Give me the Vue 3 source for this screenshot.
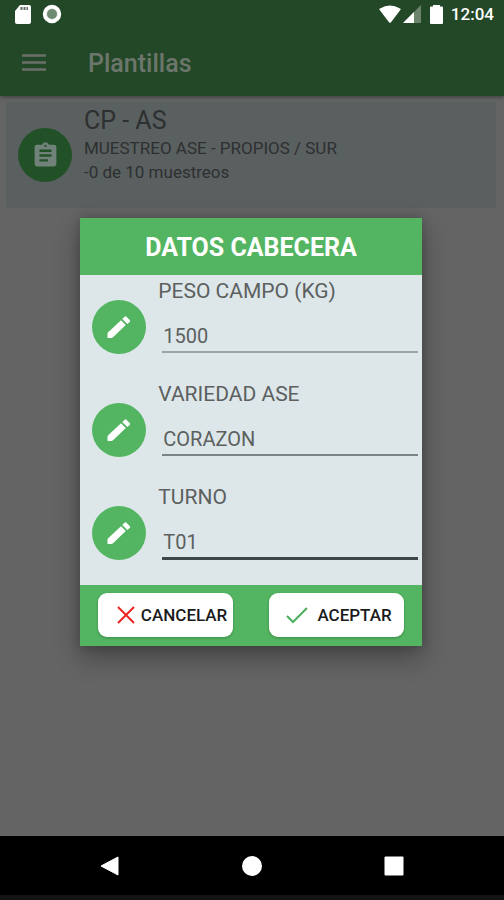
<script setup>
import { reactive } from 'vue'

const fields = reactive([
  { id: 'peso', label: 'PESO CAMPO (KG)', value: '1500', state: '' },
  { id: 'variedad', label: 'VARIEDAD ASE', value: 'CORAZON', state: 'darker' },
  { id: 'turno', label: 'TURNO', value: 'T01', state: 'active' },
])
</script>

<template>
  <div class="screen">
    <header class="top">
      <div class="status">
        <svg class="sd" viewBox="0 0 16 19" aria-hidden="true">
          <path d="M5 0h9a2 2 0 0 1 2 2v15a2 2 0 0 1-2 2H2a2 2 0 0 1-2-2V6z" fill="#fff" />
          <path d="M5.500 2h2v3h-2zM8.500 2h2v3h-2zM11.500 2h1.500v3h-1.500z" fill="#5d6d5f" />
        </svg>
        <svg class="sync" viewBox="0 0 20 20" aria-hidden="true">
          <circle cx="10" cy="10" r="7.500" fill="#dfe5e0" stroke="#fff" stroke-width="3.400" />
          <circle cx="10" cy="10" r="5" fill="#6f8a72" />
        </svg>
        <span class="grow"></span>
        <svg class="wifi" viewBox="0 0 22 18" aria-hidden="true">
          <path d="M.5 4.800Q0 4 1 3.500Q11-2.500 21 3.500Q22 4 21.500 4.800L12 17.200Q11 18.300 10 17.200z" fill="#fff" />
        </svg>
        <svg class="signal" viewBox="0 0 18 18" aria-hidden="true">
          <path d="M18 0v18H0z" fill="#6c836c" />
          <path d="M11 7v11H0z" fill="#fff" />
        </svg>
        <svg class="battery" viewBox="0 0 13 19" aria-hidden="true">
          <path d="M3 0h7v1.500h2a1 1 0 0 1 1 1V18a1 1 0 0 1-1 1H1a1 1 0 0 1-1-1V2.500a1 1 0 0 1 1-1h2z" fill="#fff" />
        </svg>
        <time class="clock">12:04</time>
      </div>
      <div class="bar">
        <button class="menu" type="button" aria-label="Menú">
          <svg viewBox="0 0 24 17" aria-hidden="true">
            <path d="M0 1.500h24M0 8.500h24M0 15.500h24" stroke="#6a7069" stroke-width="2.600" />
          </svg>
        </button>
        <h1>Plantillas</h1>
      </div>
    </header>

    <main class="content">
      <article class="card">
        <span class="badge">
          <svg viewBox="0 0 24 24" aria-hidden="true">
            <path fill="#71827a" d="M19 3h-4.180C14.400 1.840 13.300 1 12 1s-2.400.84-2.820 2H5a2 2 0 0 0-2 2v14a2 2 0 0 0 2 2h14a2 2 0 0 0 2-2V5a2 2 0 0 0-2-2zm-7 0a1 1 0 1 1 0 2 1 1 0 0 1 0-2zm2 14H7v-2h7zm3-4H7v-2h10zm0-4H7V7h10z" />
          </svg>
        </span>
        <div class="info">
          <h2>CP - AS</h2>
          <p>MUESTREO ASE - PROPIOS / SUR</p>
          <p>-0 de 10 muestreos</p>
        </div>
      </article>
    </main>

    <nav class="navbar">
      <button type="button" aria-label="Atrás">
        <svg viewBox="0 0 20 20" aria-hidden="true"><path d="M1 10 18 1v18z" fill="#fff" stroke="#fff" stroke-linejoin="round" /></svg>
      </button>
      <button type="button" aria-label="Inicio">
        <svg viewBox="0 0 20 20" aria-hidden="true"><circle cx="10" cy="10" r="10" fill="#fff" /></svg>
      </button>
      <button type="button" aria-label="Recientes">
        <svg viewBox="0 0 20 20" aria-hidden="true"><rect width="19" height="19" x=".5" y=".5" rx="1" fill="#fff" /></svg>
      </button>
    </nav>

    <div class="overlay">
      <form class="dialog" role="dialog" aria-labelledby="dialog-title" @submit.prevent>
        <h2 id="dialog-title" class="title">DATOS CABECERA</h2>
        <div class="rows">
          <div v-for="f in fields" :key="f.id" class="row">
            <span class="pencil">
              <svg viewBox="0 0 24 24" aria-hidden="true">
                <path fill="#fff" d="M.5 22.500v-3.500q0-1 .7-1.700L14 5.200l4.800 4.800L6 22.300q-.7.700-1.700.7H1q-.5 0-.5-.5zM15.300 3.900l2-2q1.200-1.200 2.400 0l3 3q1 1 0 2.200L20.300 9z" />
              </svg>
            </span>
            <div class="field">
              <label :for="f.id">{{ f.label }}</label>
              <input :id="f.id" v-model="f.value" type="text" :class="f.state" />
            </div>
          </div>
        </div>
        <div class="actions">
          <button type="button" class="cancel">
            <svg viewBox="0 0 18 18" aria-hidden="true"><path d="M1 1l16 16M17 1 1 17" stroke="#ee2222" stroke-width="2" fill="none" /></svg>
            CANCELAR
          </button>
          <button type="submit" class="accept">
            <svg viewBox="0 0 22 18" aria-hidden="true"><path d="M1 10l6 6L21 2" stroke="#4caf5c" stroke-width="2" fill="none" /></svg>
            ACEPTAR
          </button>
        </div>
      </form>
    </div>
  </div>
</template>

<style>
body {
  margin: 0;
  background: #646464;
}
</style>

<style scoped>
* {
  box-sizing: border-box;
}
.screen {
  position: relative;
  min-height: 100vh;
  display: flex;
  flex-direction: column;
  background: #646464;
  font-family: Roboto, "Liberation Sans", sans-serif;
}
h1, h2, p {
  margin: 0;
}
button {
  font-family: inherit;
  border: 0;
  padding: 0;
  cursor: pointer;
}
svg {
  display: block;
  flex: none;
}
.top {
  background: #234828;
  box-shadow: 0 1px 4px rgba(0, 0, 0, 0.4);
}
.status {
  display: flex;
  align-items: center;
  height: 28px;
  padding: 0 10px 0 15px;
}
.sd {
  width: 16px;
  height: 19px;
}
.sync {
  width: 20px;
  height: 20px;
  margin-left: 11px;
}
.grow {
  flex: 1;
}
.wifi {
  width: 22px;
  height: 18px;
}
.signal {
  width: 18px;
  height: 18px;
  margin-left: 2px;
}
.battery {
  width: 13px;
  height: 19px;
  margin-left: 9px;
}
.clock {
  margin-left: 8px;
  color: #fff;
  font-size: 17px;
  font-weight: 500;
}
.bar {
  display: flex;
  align-items: center;
  height: 68px;
  padding: 0 22px;
}
.menu {
  background: none;
}
.menu svg {
  width: 24px;
  height: 17px;
}
.bar h1 {
  margin-left: 42px;
  padding-top: 2px;
  color: #6c766b;
  font-size: 25px;
  font-weight: 500;
}
.content {
  flex: 1;
  padding: 6px 8px 0 6px;
}
.card {
  display: flex;
  align-items: center;
  gap: 12px;
  height: 106px;
  padding: 0 12px;
  border-radius: 3px;
  background: #5a5f60;
}
.badge,
.pencil {
  display: flex;
  align-items: center;
  justify-content: center;
  flex: none;
  width: 54px;
  height: 54px;
  border-radius: 50%;
  background: #225127;
}
.badge svg {
  width: 29px;
  height: 29px;
}
.pencil svg {
  width: 24px;
  height: 24px;
}
.info {
  align-self: flex-start;
  padding-top: 4px;
  color: #2d3030;
}
.info h2 {
  font-size: 25px;
  font-weight: 400;
  line-height: 30px;
}
.info p {
  font-size: 17px;
  line-height: 24px;
}
.navbar {
  display: flex;
  justify-content: space-between;
  height: 64px;
  padding: 0 100px;
  border-bottom: 5px solid #141414;
  background: #000;
}
.navbar button {
  background: none;
}
.navbar svg {
  width: 20px;
  height: 20px;
}
.overlay {
  position: absolute;
  inset: 28px 2px 64px 0;
  display: flex;
  align-items: center;
  justify-content: center;
}
.dialog {
  width: 68%;
  background: #dde7ea;
  box-shadow: 0 12px 24px rgba(0, 0, 0, 0.3), 0 0 10px rgba(0, 0, 0, 0.2);
}
.title {
  padding: 15px 0 13px;
  background: #53b561;
  color: #fff;
  font-size: 25px;
  font-weight: 700;
  line-height: 29px;
  text-align: center;
}
.rows {
  padding-bottom: 1px;
}
.row {
  display: flex;
  align-items: center;
  gap: 12px;
  height: 103px;
  padding: 0 4px 0 12px;
}
.pencil {
  background: #53b561;
}
.field {
  flex: 1;
  min-width: 0;
  align-self: flex-start;
  padding-top: 2px;
}
.field label {
  display: block;
  color: #5c605e;
  font-size: 21px;
  line-height: 28px;
}
.field input {
  display: block;
  width: calc(100% - 4px);
  height: 48px;
  margin-left: 4px;
  padding: 16px 0 0 1px;
  border: 0;
  border-bottom: 2px solid #9da5a7;
  border-radius: 0;
  outline: 0;
  background: none;
  color: #5c605e;
  font-family: inherit;
  font-size: 20px;
}
.field input.darker {
  border-bottom-color: #7c8385;
}
.field input.active {
  height: 49px;
  border-bottom: 3px solid #3f4647;
}
.actions {
  display: flex;
  justify-content: space-between;
  padding: 8px 18px 9px;
  background: #53b561;
}
.actions button {
  display: flex;
  align-items: center;
  justify-content: flex-end;
  width: 135px;
  height: 44px;
  border-radius: 9px;
  background: #fff;
  color: #1c1c1c;
  font-size: 17px;
  font-weight: 500;
  box-shadow: 0 1px 3px rgba(0, 0, 0, 0.25);
}
.actions .cancel {
  gap: 6px;
  padding-right: 6px;
}
.actions .accept {
  gap: 9px;
  padding-right: 12px;
}
.cancel svg {
  width: 18px;
  height: 18px;
}
.accept svg {
  width: 22px;
  height: 18px;
}
</style>
